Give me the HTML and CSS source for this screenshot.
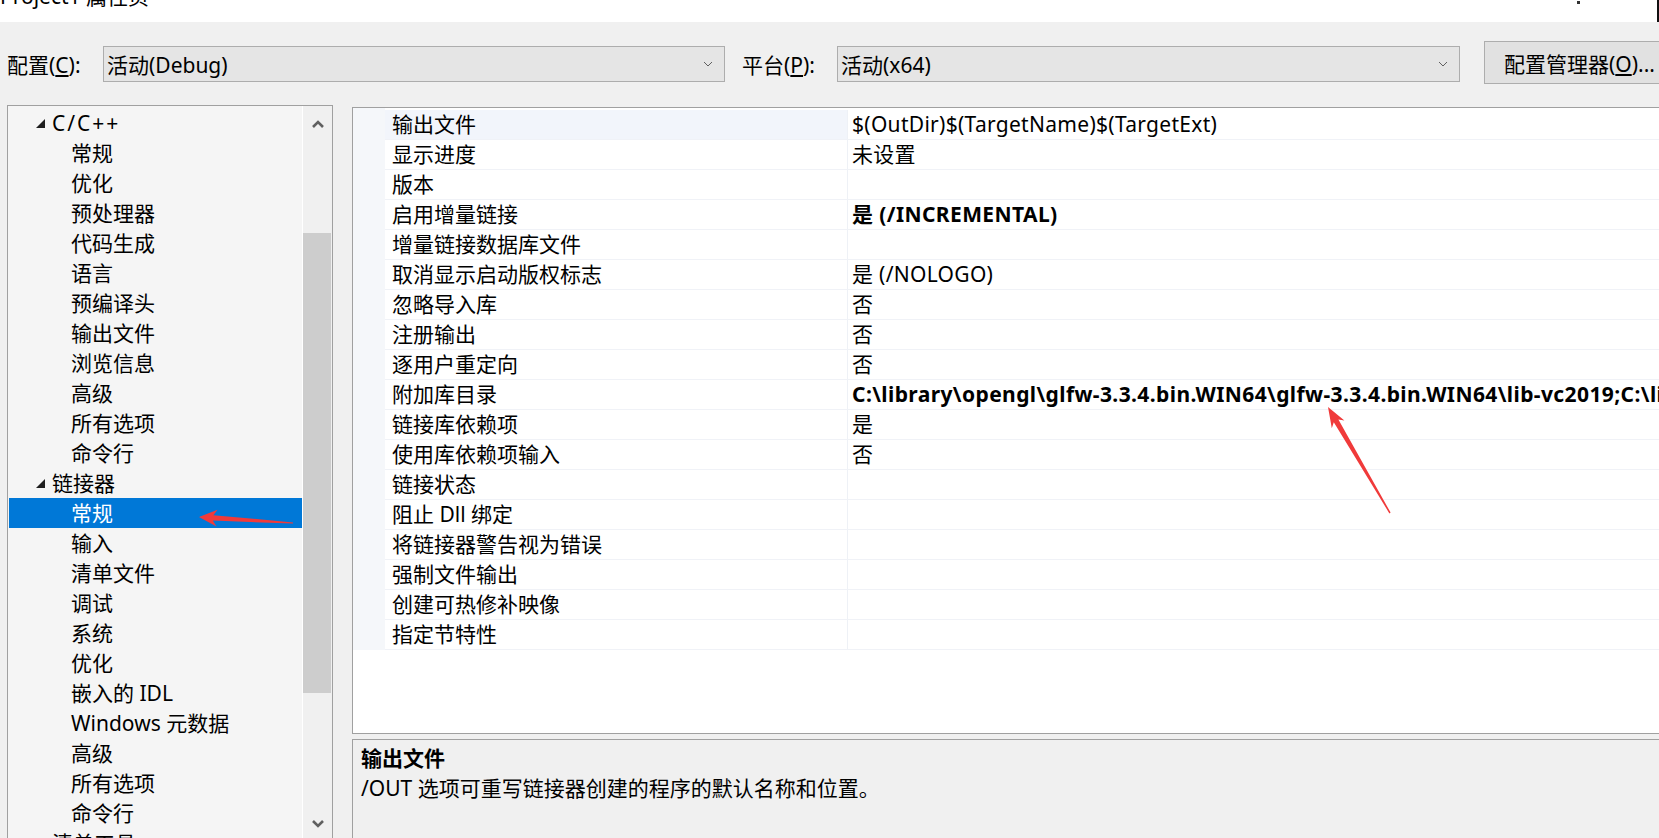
FILE: index.html
```html
<!DOCTYPE html>
<html lang="zh-CN">
<head>
  <meta charset="UTF-8" />
  <title>Project1 属性页</title>
  <link rel="stylesheet" href="styles.css">
</head>
<body>
  <div class="titlebar">
    <span class="title">Project1 属性页</span>
    <span class="win-dot"></span>
    <span class="win-edge"></span>
  </div>

  <div class="toolbar">
    <label class="tb-label">配置(<u>C</u>):</label>
    <div class="combo">
      <span>活动(Debug)</span>
      <svg class="chev" width="10" height="6" viewBox="0 0 10 6"><path d="M1 1 L5 5 L9 1" fill="none" stroke="#606060" stroke-width="1"/></svg>
    </div>
    <label class="tb-label tb-label-platform">平台(<u>P</u>):</label>
    <div class="combo combo-platform">
      <span>活动(x64)</span>
      <svg class="chev" width="10" height="6" viewBox="0 0 10 6"><path d="M1 1 L5 5 L9 1" fill="none" stroke="#606060" stroke-width="1"/></svg>
    </div>
    <button class="tb-btn">配置管理器(<u>O</u>)...</button>
  </div>

  <div class="main">
    <div class="tree">
      <ul class="tree-list">
        <li class="tree-item parent"><svg class="exp" width="10" height="10" viewBox="0 0 10 10"><path d="M10 1 L10 10 L1 10 Z" fill="#1e1e1e"/></svg><span class="cpp">C/C++</span></li>
        <li class="tree-item">常规</li>
        <li class="tree-item">优化</li>
        <li class="tree-item">预处理器</li>
        <li class="tree-item">代码生成</li>
        <li class="tree-item">语言</li>
        <li class="tree-item">预编译头</li>
        <li class="tree-item">输出文件</li>
        <li class="tree-item">浏览信息</li>
        <li class="tree-item">高级</li>
        <li class="tree-item">所有选项</li>
        <li class="tree-item">命令行</li>
        <li class="tree-item parent"><svg class="exp" width="10" height="10" viewBox="0 0 10 10"><path d="M10 1 L10 10 L1 10 Z" fill="#1e1e1e"/></svg>链接器</li>
        <li class="tree-item selected">常规</li>
        <li class="tree-item">输入</li>
        <li class="tree-item">清单文件</li>
        <li class="tree-item">调试</li>
        <li class="tree-item">系统</li>
        <li class="tree-item">优化</li>
        <li class="tree-item">嵌入的 IDL</li>
        <li class="tree-item">Windows 元数据</li>
        <li class="tree-item">高级</li>
        <li class="tree-item">所有选项</li>
        <li class="tree-item">命令行</li>
        <li class="tree-item parent"><svg class="exp" width="10" height="10" viewBox="0 0 10 10"><path d="M3 1 L8 5.5 L3 10 Z" fill="none" stroke="#1e1e1e" stroke-width="1"/></svg>清单工具</li>
      </ul>
      <div class="scrollbar">
        <div class="sb-arrow">
          <svg width="12" height="8" viewBox="0 0 12 8"><path d="M1 7 L6 2 L11 7" fill="none" stroke="#606060" stroke-width="2.6"/></svg>
        </div>
        <div class="sb-track"><div class="sb-thumb"></div></div>
        <div class="sb-arrow">
          <svg width="12" height="8" viewBox="0 0 12 8"><path d="M1 1 L6 6 L11 1" fill="none" stroke="#606060" stroke-width="2.6"/></svg>
        </div>
      </div>
    </div>

    <div class="right">
      <div class="grid">
        <div class="props">
          <div class="prop-row current"><div></div><div class="prop-name">输出文件</div><div class="prop-value">$(OutDir)$(TargetName)$(TargetExt)</div></div>
          <div class="prop-row"><div></div><div class="prop-name">显示进度</div><div class="prop-value">未设置</div></div>
          <div class="prop-row"><div></div><div class="prop-name">版本</div><div class="prop-value"></div></div>
          <div class="prop-row"><div></div><div class="prop-name">启用增量链接</div><div class="prop-value bold">是 (/INCREMENTAL)</div></div>
          <div class="prop-row"><div></div><div class="prop-name">增量链接数据库文件</div><div class="prop-value"></div></div>
          <div class="prop-row"><div></div><div class="prop-name">取消显示启动版权标志</div><div class="prop-value">是 (/NOLOGO)</div></div>
          <div class="prop-row"><div></div><div class="prop-name">忽略导入库</div><div class="prop-value">否</div></div>
          <div class="prop-row"><div></div><div class="prop-name">注册输出</div><div class="prop-value">否</div></div>
          <div class="prop-row"><div></div><div class="prop-name">逐用户重定向</div><div class="prop-value">否</div></div>
          <div class="prop-row"><div></div><div class="prop-name">附加库目录</div><div class="prop-value bold">C:\library\opengl\glfw-3.3.4.bin.WIN64\glfw-3.3.4.bin.WIN64\lib-vc2019;C:\library\opengl\glad</div></div>
          <div class="prop-row"><div></div><div class="prop-name">链接库依赖项</div><div class="prop-value">是</div></div>
          <div class="prop-row"><div></div><div class="prop-name">使用库依赖项输入</div><div class="prop-value">否</div></div>
          <div class="prop-row"><div></div><div class="prop-name">链接状态</div><div class="prop-value"></div></div>
          <div class="prop-row"><div></div><div class="prop-name">阻止 Dll 绑定</div><div class="prop-value"></div></div>
          <div class="prop-row"><div></div><div class="prop-name">将链接器警告视为错误</div><div class="prop-value"></div></div>
          <div class="prop-row"><div></div><div class="prop-name">强制文件输出</div><div class="prop-value"></div></div>
          <div class="prop-row"><div></div><div class="prop-name">创建可热修补映像</div><div class="prop-value"></div></div>
          <div class="prop-row"><div></div><div class="prop-name">指定节特性</div><div class="prop-value"></div></div>
        </div>
      </div>

      <div class="desc">
        <div class="desc-title">输出文件</div>
        <div>/OUT 选项可重写链接器创建的程序的默认名称和位置。</div>
      </div>
    </div>
  </div>

  <!-- red annotation arrows from the screenshot tool -->
  <svg class="annot" width="1659" height="838" viewBox="0 0 1659 838">
    <polygon fill="#f03a3a" points="199,517 217.5,509.8 213.4,515.2 293,522.4 293,523.6 212.8,520.6 216.5,526.4"/>
    <polygon fill="#f03a3a" points="1328,407 1344.4,420.5 1338.4,419.4 1390.6,512.6 1389.4,513.4 1333.8,422.2 1331.8,428.2"/>
  </svg>
</body>
</html>
```

FILE: styles.css
```css
* {
  box-sizing: border-box;
}

body {
  margin: 0;
  width: 1659px;
  height: 838px;
  overflow: hidden;
  position: relative;
  background-color: #f0f0f0;
  font-family: "Noto Sans", "Noto Sans CJK SC", sans-serif;
  font-size: 21px;
  color: #000;
}

/* window title, mostly cut off at the top */
.titlebar {
  height: 22px;
  background-color: #fff;
  display: flex;
  overflow: hidden;
}

.title {
  margin-top: -15px;
  line-height: 22px;
  white-space: nowrap;
}

.win-dot {
  margin-left: auto;
  margin-right: 77px;
  margin-top: 1px;
  width: 3px;
  height: 3px;
  background-color: #333;
}

.win-edge {
  width: 2px;
  background-color: #111;
}

/* config / platform row */
.toolbar {
  height: 83px;
  display: flex;
  align-items: center;
  padding-left: 7px;
}

.tb-label {
  width: 96px;
  flex: none;
  white-space: nowrap;
}

.tb-label-platform {
  margin-left: 17px;
  width: 95px;
}

.combo {
  width: 622px;
  height: 36px;
  flex: none;
  display: flex;
  align-items: center;
  justify-content: space-between;
  padding: 0 11px 0 3px;
  background-color: #e5e5e5;
  border: 1px solid #adadad;
  white-space: nowrap;
}

.combo-platform {
  width: 623px;
}

.tb-btn {
  margin-left: 24px;
  margin-top: -2px;
  width: 210px;
  height: 43px;
  flex: none;
  padding: 0 0 0 19px;
  text-align: left;
  font: inherit;
  color: #000;
  background-color: #e1e1e1;
  border: 1px solid #adadad;
  white-space: nowrap;
}

/* main area */
.main {
  display: flex;
  align-items: flex-start;
}

.tree {
  margin-left: 7px;
  width: 326px;
  height: 738px;
  flex: none;
  display: flex;
  overflow: hidden;
  background-color: #f5f5f5;
  border: 1px solid #a0a0a0;
}

.tree-list {
  list-style: none;
  margin: 0;
  padding: 2px 0 0 1px;
  width: 294px;
}

.tree-item {
  height: 30px;
  line-height: 30px;
  padding-left: 62px;
  white-space: nowrap;
}

.tree-item.parent {
  padding-left: 26px;
  display: flex;
  align-items: center;
}

.cpp {
  letter-spacing: 2px;
}

.exp {
  margin-right: 7px;
  flex: none;
}

.tree-item.selected {
  background-color: #0078d7;
  color: #fff;
}

.scrollbar {
  width: 30px;
  display: flex;
  flex-direction: column;
  background-color: #f0f0f0;
  border-left: 1px solid #fff;
}

.sb-arrow {
  height: 36px;
  flex: none;
  display: flex;
  align-items: center;
  justify-content: center;
}

.sb-track {
  flex: 1;
  padding-top: 91px;
  padding-right: 1px;
}

.sb-thumb {
  height: 460px;
  background-color: #cdcdcd;
}

.right {
  margin-left: 19px;
  margin-top: 2px;
  width: 1330px;
  flex: none;
}

.grid {
  height: 627px;
  background-color: #fff;
  border: 1px solid #a0a0a0;
}

.props {
  padding-top: 2px;
  background: linear-gradient(to right, #f5f7fa 32px, transparent 32px);
}

.prop-row {
  display: grid;
  grid-template-columns: 32px 462px 1fr;
  height: 30px;
}

.prop-name,
.prop-value {
  line-height: 29px;
  border-bottom: 1px solid #f0f2f7;
  white-space: nowrap;
  overflow: hidden;
}

.prop-name {
  padding-left: 7px;
}

.prop-value {
  padding-left: 4px;
  border-left: 1px solid #eef1f6;
  letter-spacing: 0.3px;
}

.prop-row.current .prop-name {
  background-color: #f2f5fb;
}

.bold {
  font-weight: 700;
  letter-spacing: 0.4px;
}

.desc {
  margin-top: 5px;
  height: 120px;
  padding: 3px 8px;
  line-height: 30px;
  background-color: #f0f0f0;
  border: 1px solid #a0a0a0;
  border-right: none;
}

.desc-title {
  font-weight: 700;
}

.annot {
  position: absolute;
  top: 0;
  left: 0;
  pointer-events: none;
}
```
